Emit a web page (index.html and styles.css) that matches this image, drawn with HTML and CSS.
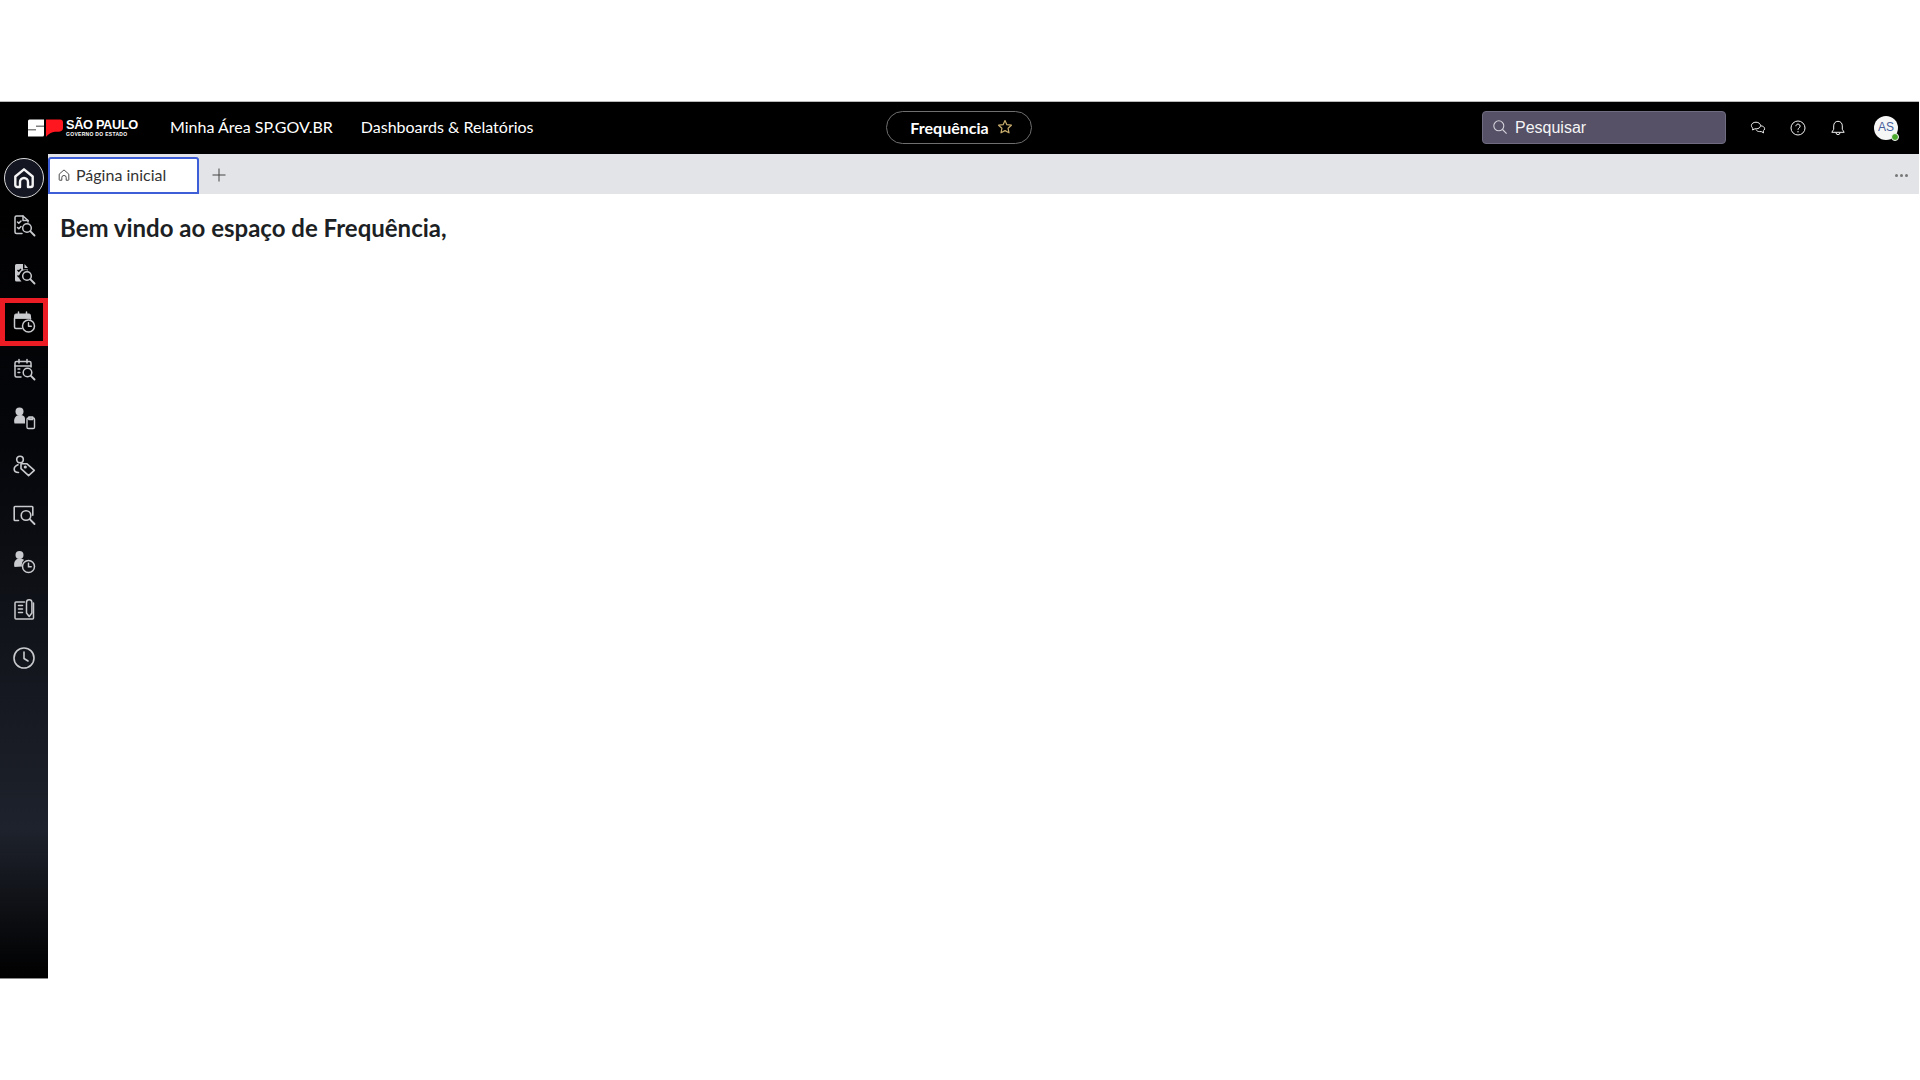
FILE: index.html
```html
<!DOCTYPE html>
<html lang="pt-BR">
<head>
<meta charset="utf-8">
<title>Frequência</title>
<link rel="stylesheet" href="styles.css">
</head>
<body>
<div class="top-gap"></div>
<div class="app">
  <header class="topbar">
    <div class="brand">
      <svg class="logo-mark" viewBox="0 0 36 18" width="36" height="18">
        <path fill="#fff" d="M2.500 .5 H17 V6.700 H9 V7.500 H17 V16 Q17 17.500 15.500 17.500 H1 V11.300 H9 V10.500 H1 V2 Q1 .5 2.500 .5 Z"/>
        <path fill="#ff161f" d="M19 .5 H33 Q36 .5 36 3.500 V9 Q36 12.300 32 12.800 H28 Q23 13.300 19 17.800 Z"/>
      </svg>
      <div class="brand-text">
        <span class="brand-main">SÃO PAULO</span>
        <span class="brand-sub">GOVERNO DO ESTADO</span>
      </div>
    </div>
    <nav class="nav">
      <a class="nav-link">Minha Área SP.GOV.BR</a>
      <a class="nav-link">Dashboards &amp; Relatórios</a>
    </nav>
    <div class="center">
      <div class="pill">
        <span>Frequência</span>
        <svg viewBox="0 0 16 16" width="16" height="16"><path fill="none" stroke="#c9ad6e" stroke-width="1.2" stroke-linejoin="round" d="M8 1.6 9.9 5.7 14.4 6.2 11.1 9.3 12 13.8 8 11.6 4 13.8 4.9 9.3 1.6 6.2 6.1 5.7Z"/></svg>
      </div>
    </div>
    <div class="search">
      <svg viewBox="0 0 16 16" width="16" height="16"><circle cx="6.8" cy="6.8" r="5" fill="none" stroke="#d5d3dc" stroke-width="1.1"/><path d="M10.5 10.5 14.6 14.6" stroke="#d5d3dc" stroke-width="1.1"/></svg>
      <span>Pesquisar</span>
    </div>
    <div class="tools">
      <svg class="tool" viewBox="0 0 16 16" width="16" height="16"><path fill="none" stroke="#f2f2f2" stroke-width="1" d="M6 2.200c-2.600 0-4.600 1.400-4.600 3.400 0 1.100.6 2 1.500 2.600L2.600 10l2.300-1.200h1.300c2.600 0 4.300-1.400 4.300-3.200S8.600 2.200 6 2.200Z"/><path fill="none" stroke="#f2f2f2" stroke-width="1" d="M10.900 5.800c2.100.2 3.700 1.300 3.700 2.900 0 1-.6 1.800-1.400 2.300l.4 1.900-2.300-1.300H9.600c-1.700 0-3.100-.8-3.500-2"/></svg>
      <svg class="tool" viewBox="0 0 16 16" width="16" height="16"><circle cx="8" cy="8" r="7" fill="none" stroke="#f2f2f2"/><path fill="none" stroke="#f2f2f2" d="M5.900 6.200a2.100 2.100 0 1 1 3.300 1.700c-.8.5-1.200.9-1.200 1.900"/><circle cx="8" cy="11.700" r=".7" fill="#f2f2f2"/></svg>
      <svg class="tool" viewBox="0 0 16 16" width="16" height="16"><path fill="none" stroke="#f2f2f2" d="M8 1.300c-2.700 0-4.300 2-4.300 4.600v3.400L1.800 12.300h12.400l-1.900-3V5.900c0-2.600-1.600-4.600-4.300-4.600Z"/><path fill="none" stroke="#f2f2f2" d="M6 12.600a2 2 0 0 0 4 0"/></svg>
      <div class="avatar">AS<i class="presence"></i></div>
    </div>
  </header>
  <div class="main">
    <aside class="sidebar">
      <a class="side-item home"><svg viewBox="0 0 24 24" width="24" height="24"><path fill="none" stroke="#f4f4f4" stroke-width="2.400" stroke-linejoin="round" d="M3.300 10.500 12 3.300l8.700 7.200V19a2 2 0 0 1-2 2H16v-5a4 4 0 0 0-8 0v5H5.300a2 2 0 0 1-2-2Z"/></svg></a>
      <a class="side-item"><svg viewBox="0 0 24 24" width="24" height="24"><g fill="none" stroke="#c8cacd" stroke-width="1.500" stroke-linecap="round" stroke-linejoin="round"><path d="M10 19.500H4.500A1.500 1.500 0 0 1 3 18V3.500A1.500 1.500 0 0 1 4.500 2h6.500l5 4.500v1.500"/><path d="M11 2v4.500h5"/><path d="m5.500 8 1.300 1.300L9 7"/><path d="m5.500 13.500 1.300 1.300L9 12.500"/><circle cx="15" cy="14" r="4.300"/><path d="m18.200 17.200 4.300 4.300" stroke-width="1.900"/></g></svg></a>
      <a class="side-item"><svg viewBox="0 0 24 24" width="24" height="24"><path fill="#c8cacd" d="M4.500 2H11v5.500h5v1a6.500 6.500 0 0 0-6.500 11H4.500A1.500 1.500 0 0 1 3 18V3.500A1.500 1.500 0 0 1 4.500 2Z"/><path fill="#c8cacd" d="M12.500 2 16 6h-3.500Z"/><g fill="none" stroke="#000" stroke-width="1.300"><path d="m5.500 8 1.300 1.300L9 7"/><path d="m5.500 13.500 1.300 1.300L9 12.500"/></g><g fill="none" stroke="#c8cacd" stroke-width="1.500" stroke-linecap="round"><circle cx="15" cy="14" r="4.300"/><path d="m18.200 17.200 4.300 4.300" stroke-width="1.900"/></g></svg></a>
      <a class="side-item active"><svg viewBox="0 0 24 24" width="24" height="24"><g stroke="#c8cacd" stroke-linecap="round" stroke-linejoin="round"><path fill="#c8cacd" stroke-width="1" d="M2.500 8V5.500A1.500 1.500 0 0 1 4 4h13a1.500 1.500 0 0 1 1.500 1.500V8Z"/><path fill="none" stroke-width="1.500" d="M6.500 2v3M14.500 2v3M2.500 8v9A1.500 1.500 0 0 0 4 18.500h5.500M18.500 8v1"/><circle cx="16.500" cy="16" r="6" fill="none" stroke-width="1.500"/><path fill="none" stroke-width="1.400" d="M16.500 12.800V16.300h2.800"/></g></svg></a>
      <a class="side-item"><svg viewBox="0 0 24 24" width="24" height="24"><g fill="none" stroke="#c8cacd" stroke-width="1.500" stroke-linecap="round" stroke-linejoin="round"><path d="M9 19H4.500A1.500 1.500 0 0 1 3 17.500V5A1.500 1.500 0 0 1 4.500 3.500h13A1.500 1.500 0 0 1 19 5v4"/><path d="M3 8h16M7 1.500v3.500M15 1.500v3.500"/><path d="M6 11h1.800M6 14.500h1.800"/><circle cx="15.500" cy="14.500" r="4.300"/><path d="m18.700 17.700 3.800 3.800" stroke-width="1.900"/></g></svg></a>
      <a class="side-item"><svg viewBox="0 0 24 24" width="24" height="24"><circle cx="7.500" cy="5.500" r="4" fill="#c8cacd"/><path fill="#c8cacd" d="M2.500 17.500c-1.200-4 .5-8.500 5-8.500s5.500 2 5.500 4v4.500Z"/><g fill="none" stroke="#c8cacd" stroke-width="1.400" stroke-linejoin="round"><rect x="15" y="12" width="7.500" height="10.500" rx="1.300"/><path d="M16.800 11h4v2.500h-4Z"/></g></svg></a>
      <a class="side-item"><svg viewBox="0 0 24 24" width="24" height="24"><g fill="none" stroke="#c8cacd" stroke-width="1.600" stroke-linejoin="round" stroke-linecap="round"><circle cx="8" cy="5.500" r="3.300"/><path d="M6 10.800c-2.500 1-3.800 2.800-3.800 4.500 0 2 1.500 3.200 4.300 3.200"/><path d="M9 9.800h6l7.300 6.600-5.700 5.300-7.600-7Z"/><circle cx="13.300" cy="13" r=".8"/></g></svg></a>
      <a class="side-item"><svg viewBox="0 0 24 24" width="24" height="24"><g fill="none" stroke="#c8cacd" stroke-width="1.600" stroke-linecap="round" stroke-linejoin="round"><path d="M6.500 18.500H3a.8.800 0 0 1-.8-.8V5.300A.8.800 0 0 1 3 4.500h17a.8.800 0 0 1 .8.800v8"/><circle cx="14" cy="13.500" r="4.800"/><path d="m17.700 17.200 4.800 4.800" stroke-width="1.900"/></g></svg></a>
      <a class="side-item"><svg viewBox="0 0 24 24" width="24" height="24"><circle cx="7.500" cy="5" r="4" fill="#c8cacd"/><path fill="#c8cacd" d="M2.500 17c-1.200-4 .5-8.500 5-8.500 2 0 3.500.5 4.500 1.500-2 1.500-2.500 4-2 6.500Z"/><g fill="none" stroke="#c8cacd" stroke-width="1.500" stroke-linecap="round"><circle cx="16.500" cy="16.500" r="6"/><path d="M16.500 13.300v3.400h2.700"/></g></svg></a>
      <a class="side-item"><svg viewBox="0 0 24 24" width="24" height="24"><g fill="none" stroke="#c8cacd" stroke-width="1.500" stroke-linejoin="round" stroke-linecap="round"><path d="M12.500 4H4a1 1 0 0 0-1 1v15a1 1 0 0 0 1 1h16.500a1 1 0 0 0 1-1V5"/><path d="M6.500 7.500H10.500M6.500 11H10.500M6.500 14.500H10.500"/><path d="M14.500 4.500a2.700 2.700 0 0 1 5.400 0V15l-2.700 3.500L14.500 15Z"/></g></svg></a>
      <a class="side-item"><svg viewBox="0 0 24 24" width="24" height="24"><g fill="none" stroke="#c8cacd" stroke-width="1.600" stroke-linecap="round" stroke-linejoin="round"><circle cx="12" cy="12" r="10"/><path d="M12 6v6.500l4 2.500"/></g></svg></a>
    </aside>
    <section class="workspace">
      <div class="tabbar">
        <div class="tab">
          <svg viewBox="0 0 16 16" width="14" height="14"><path fill="none" stroke="#333" d="M2.500 7 8 2.200 13.500 7v6.300a.7.700 0 0 1-.7.700H10.500v-3a2.500 2.500 0 0 0-5 0v3H3.200a.7.700 0 0 1-.7-.7Z"/></svg>
          <span>Página inicial</span>
        </div>
        <svg class="plus" viewBox="0 0 14 14" width="14" height="14"><path d="M7 .500v13M.500 7h13" stroke="#444" stroke-width="1"/></svg>
        <div class="more"><i></i><i></i><i></i></div>
      </div>
      <div class="content">
        <h1>Bem vindo ao espaço de Frequência,</h1>
      </div>
    </section>
  </div>
</div>
</body>
</html>
```
FILE: styles.css
```css
* { box-sizing: border-box; }
html, body { margin: 0; padding: 0; height: 100%; background: #fff; overflow: hidden; }
body { font-family: Lato, "Liberation Sans", sans-serif; }
.top-gap { height: 101px; }
.app { height: 878px; width: 1919px; display: flex; flex-direction: column; border-top: 1px solid #b9b9b9; }
.topbar { height: 52px; flex: none; background: #000; display: flex; align-items: center; position: relative; color: #fff; }
.brand { display: flex; align-items: center; margin-left: 27px; gap: 3px; }
.brand-text { display: flex; flex-direction: column; color: #fff; }
.brand-main { font: 700 12.800px/12px "Liberation Sans", sans-serif; letter-spacing: -.35px; white-space: nowrap; }
.brand-sub { font: 700 5px/6px "Liberation Sans", sans-serif; letter-spacing: .3px; white-space: nowrap; }
.nav { display: flex; gap: 28px; margin-left: 32px; margin-bottom: 3px; }
.nav-link { font-size: 16px; color: #fff; white-space: nowrap; }
.center { position: absolute; left: 886px; top: 9px; }
.pill { width: 146px; height: 33px; border: 1px solid #6f6f6f; border-radius: 17px; display: flex; align-items: center; justify-content: center; gap: 8px; font-size: 16px; font-weight: 700; padding: 0 0 1px 5px; }
.search { margin-left: auto; margin-bottom: 2px; width: 244px; height: 33px; background: #565166; border: 1px solid #6f6b80; border-radius: 4px; display: flex; align-items: center; gap: 7px; padding-left: 9px; font: 16px "Liberation Sans", sans-serif; color: #f5f5f5; }
.search span { position: relative; top: 0.5px; }
.tools { display: flex; align-items: center; margin-left: 24px; margin-right: 21px; gap: 24px; }
.tool { display: block; }
.avatar { width: 24px; height: 24px; border-radius: 50%; background: #f6f6f6; color: #47609c; font: 12px/23px "Liberation Sans", sans-serif; text-align: center; position: relative; margin-left: 4px; }
.presence { position: absolute; right: -1px; bottom: -1px; width: 8px; height: 8px; border-radius: 50%; background: #4aa82c; border: 1px solid #f6f6f6; }
.main { flex: 1; display: flex; min-height: 0; }
.sidebar { width: 48px; flex: none; background: linear-gradient(180deg, #000 0%, #05060a 35%, #1e222c 82%, #000 100%); display: flex; flex-direction: column; align-items: center; padding-top: 4px; border-bottom: 1px solid #8a8a8a; }
.side-item { width: 48px; height: 48px; display: flex; align-items: center; justify-content: center; flex: none; }
.home { width: 40px; height: 40px; margin: 0 0 4px; border: 1px solid #d9d9d9; border-radius: 50%; background: #141622; }
.side-item.active { border: 5px solid #ec1c24; background: #000; }
.workspace { flex: 1; display: flex; flex-direction: column; min-width: 0; }
.tabbar { height: 40px; flex: none; background: #e3e4e8; display: flex; align-items: center; }
.tab { width: 151px; height: 37px; margin-top: 3px; background: #fff; border: 2px solid #3e5ed8; border-radius: 3px 3px 0 0; display: flex; align-items: center; gap: 5px; padding: 0 0 2px 7px; font-size: 16px; color: #333; }
.plus { margin-left: 13px; margin-top: 2px; }
.more { margin-left: auto; margin-right: 11px; margin-top: 2px; display: flex; gap: 2px; }
.more i { width: 3px; height: 3px; border-radius: 50%; background: #777; }
.content { flex: 1; background: #fff; padding: 18px 12px; }
h1 { margin: 0; font-size: 24px; line-height: 32px; font-weight: 700; color: #1c1f24; }
```
